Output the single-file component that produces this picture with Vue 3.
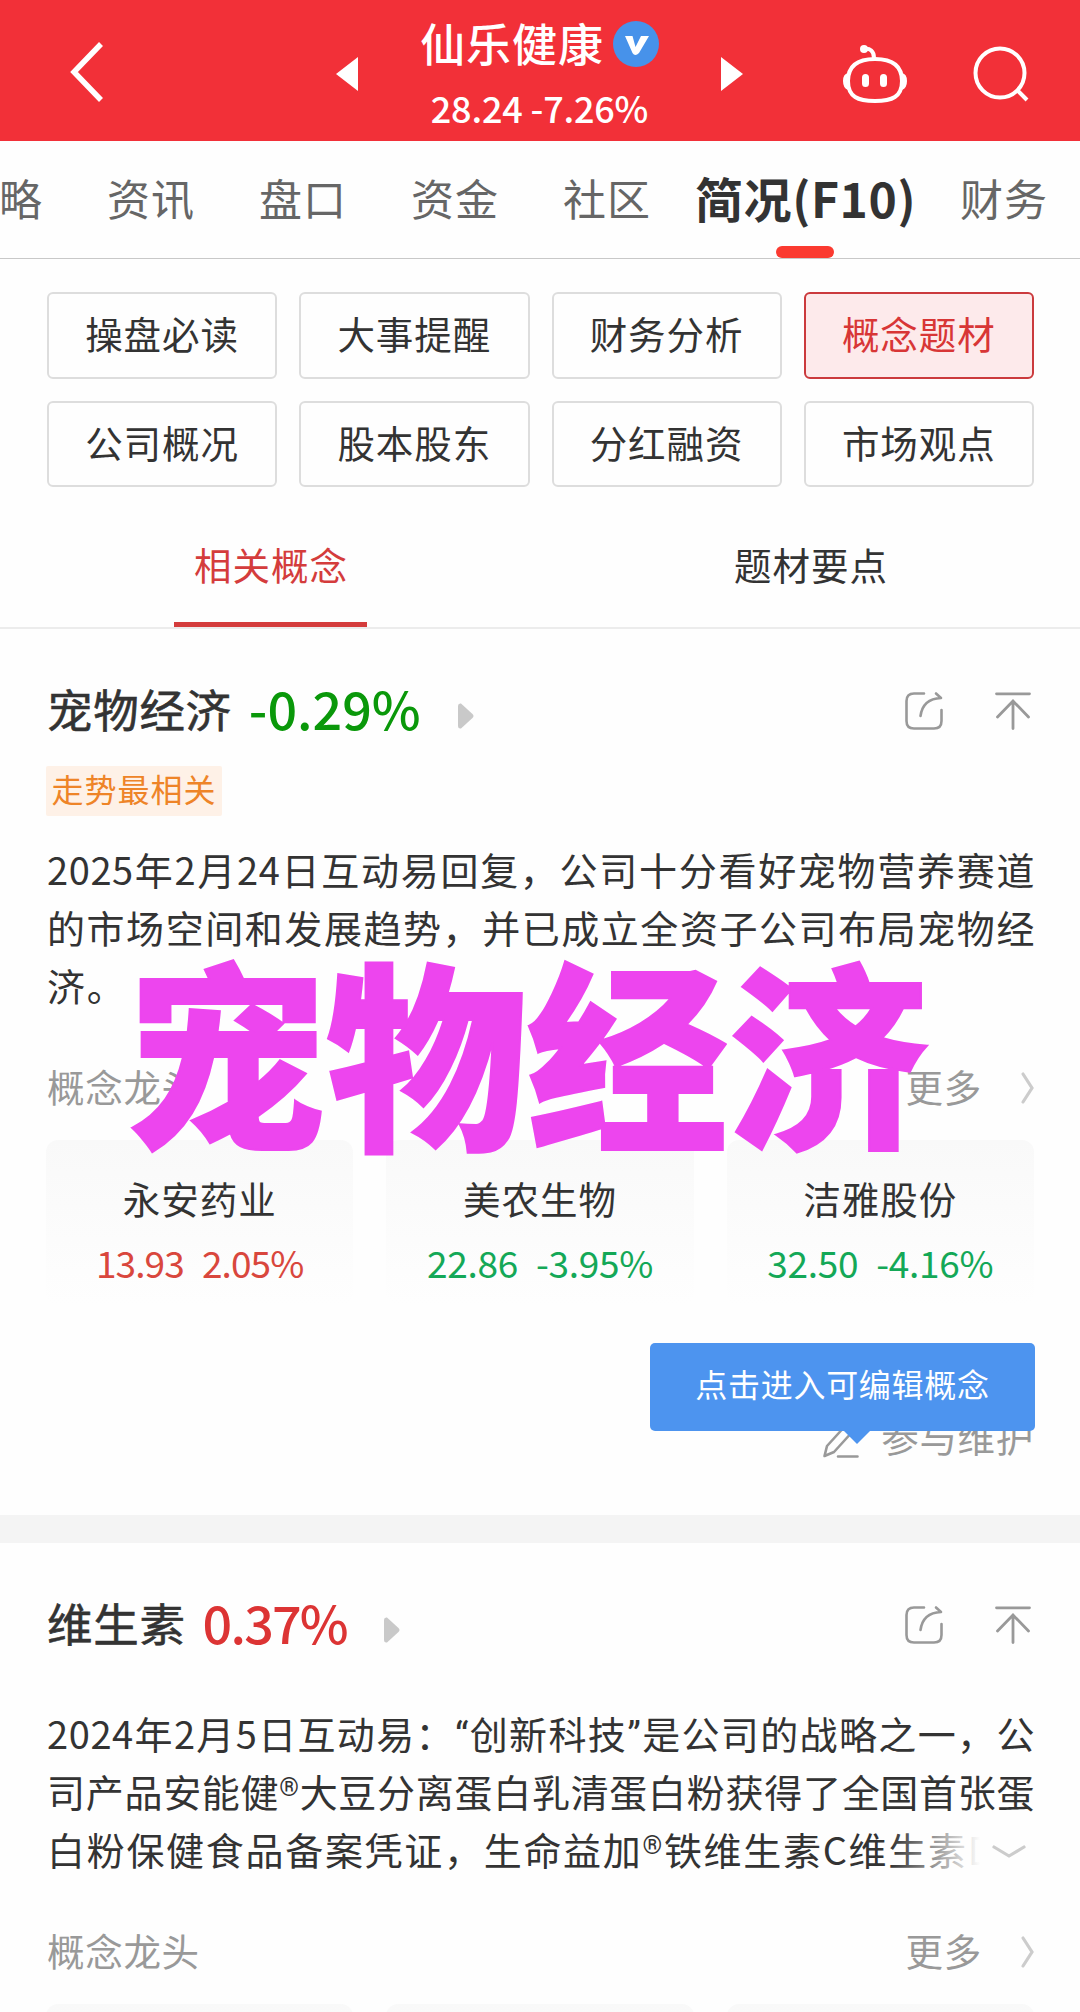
<template>
  <div class="page">
    <header class="top-bar">
      <svg class="back" viewBox="0 0 34 60" fill="none">
        <path d="M31 2 L4 30 L31 58" stroke="#fff" stroke-width="5.5" />
      </svg>
      <svg class="prev" viewBox="0 0 22 34"><path d="M22 0 V34 L0 17 Z" fill="#fff" /></svg>
      <div class="stock">
        <div class="stock-name">
          <span>{{ stock.name }}</span>
          <svg class="badge" viewBox="0 0 46 46">
            <circle cx="23" cy="23" r="23" fill="#4792ea" />
            <path d="M12 15 H19.5 L22.5 26 L28 15 H36 L26 32 Q22 36 19.5 32 Z" fill="#fff" />
          </svg>
        </div>
        <div class="stock-price">{{ stock.price }} {{ stock.change }}</div>
      </div>
      <svg class="next" viewBox="0 0 22 34"><path d="M0 0 V34 L22 17 Z" fill="#fff" /></svg>
      <svg class="robot" viewBox="0 0 64 60" fill="none" stroke="#fff">
        <circle cx="21" cy="5" r="4" fill="#fff" stroke="none" />
        <path d="M21 5 C27 4 31 7 31 14" stroke-width="4" />
        <path d="M32 15 C48 15 59 21 59 37 C59 53 49 57 32 57 C15 57 5 53 5 37 C5 21 16 15 32 15 Z" stroke-width="4" />
        <path d="M5 29 Q0 30 0 37 Q0 44 5 46 Z M59 29 Q64 30 64 37 Q64 44 59 46 Z" fill="#fff" stroke="none" />
        <path d="M22.5 33.500 V39.500 M40.500 33.500 V39.500" stroke-width="7" stroke-linecap="round" />
      </svg>
      <svg class="search" viewBox="0 0 56 56" fill="none" stroke="#fff" stroke-width="4">
        <circle cx="27" cy="27" r="24.500" />
        <path d="M44 44 L54 54" />
      </svg>
    </header>

    <nav class="tabs">
      <span v-for="t in tabs" :key="t" :class="['tab', { active: t === activeTab }]">{{ t }}</span>
    </nav>

    <div class="menu">
      <div v-for="m in menu" :key="m" :class="['menu-item', { active: m === activeMenu }]">{{ m }}</div>
    </div>

    <div class="sub-tabs">
      <div class="sub-tab active"><span>相关概念</span></div>
      <div class="sub-tab"><span>题材要点</span></div>
    </div>

    <section v-for="c in concepts" :key="c.name" class="concept">
      <div class="concept-head">
        <span class="concept-name">{{ c.name }}</span>
        <span :class="['concept-rate', c.up ? 'up' : 'down']">{{ c.rate }}</span>
        <svg class="play" viewBox="0 0 16 26">
          <path d="M0 3 Q0 0 3 0.500 L14.500 11 Q16.500 13 14.500 15 L3 25.500 Q0 26 0 23 Z" fill="#c9c9c9" />
        </svg>
        <svg class="share" viewBox="0 0 38 38" fill="none" stroke="#999" stroke-width="2.6" stroke-linecap="round" stroke-linejoin="round">
          <path d="M19 1.500 H9 Q1.500 1.500 1.500 9 V29 Q1.500 36.500 9 36.500 H29 Q36.500 36.500 36.500 29 V18" />
          <path d="M15.500 24 C17 13 24 6.500 36 6 L31 1.500" />
        </svg>
        <svg class="to-top" viewBox="0 0 36 38" fill="none" stroke="#999" stroke-width="2.800" stroke-linecap="round">
          <path d="M1.500 1.800 H34.500 M18 9 V36.500 M2.500 25 L18 9 L33.500 25" />
        </svg>
      </div>
      <div v-if="c.tag" class="tag">{{ c.tag }}</div>

      <div :class="['desc', { folded: c.folded }]">
        <p v-for="(line, i) in c.lines" :key="i" class="line">
          <span v-for="(part, j) in split(line)" :key="j" :class="partClass(part)">{{ part }}</span>
        </p>
        <div v-if="c.folded" class="fold">
          <svg viewBox="0 0 34 14" fill="none" stroke="#ccc" stroke-width="3.200" stroke-linecap="round">
            <path d="M2 2 L17 11 L32 2" />
          </svg>
        </div>
      </div>

      <div class="leader-head">
        <span>概念龙头</span>
        <span class="more">更多</span>
        <svg class="arrow" viewBox="0 0 13 32" fill="none" stroke="#ccc" stroke-width="3.200" stroke-linecap="round">
          <path d="M2 2 L11 16 L2 30" />
        </svg>
      </div>
      <div class="leaders">
        <div v-for="(s, k) in c.leaders" :key="k" class="leader">
          <div class="leader-name">{{ s.name }}</div>
          <div :class="['leader-quote', s.up ? 'up' : 'down']">
            <span>{{ s.price }}</span><span>{{ s.rate }}</span>
          </div>
        </div>
      </div>

      <div v-if="c.tip" class="maintain">
        <svg class="pencil" viewBox="0 0 36 38" fill="none" stroke="#999" stroke-width="2.600" stroke-linecap="round" stroke-linejoin="round">
          <path d="M1.500 36 L4 26 L24 4 L31 10 L11 32 Z M15 36.500 H34.500" />
        </svg>
        <span>参与维护</span>
        <div class="tip">{{ c.tip }}</div>
      </div>
    </section>

    <div class="caption">宠物经济</div>
  </div>
</template>

<script setup>
const stock = { name: '仙乐健康', price: '28.24', change: '-7.26%' }

const tabs = ['略', '资讯', '盘口', '资金', '社区', '简况(F10)', '财务']
const activeTab = '简况(F10)'

const menu = ['操盘必读', '大事提醒', '财务分析', '概念题材', '公司概况', '股本股东', '分红融资', '市场观点']
const activeMenu = '概念题材'

const concepts = [
  {
    name: '宠物经济',
    rate: '-0.29%',
    up: false,
    tag: '走势最相关',
    lines: [
      '2025年2月24日互动易回复，公司十分看好宠物营养赛道',
      '的市场空间和发展趋势，并已成立全资子公司布局宠物经',
      '济。'
    ],
    leaders: [
      { name: '永安药业', price: '13.93', rate: '2.05%', up: true },
      { name: '美农生物', price: '22.86', rate: '-3.95%', up: false },
      { name: '洁雅股份', price: '32.50', rate: '-4.16%', up: false }
    ],
    tip: '点击进入可编辑概念'
  },
  {
    name: '维生素',
    rate: '0.37%',
    up: true,
    folded: true,
    lines: [
      '2024年2月5日互动易：“创新科技”是公司的战略之一，公',
      '司产品安能健®大豆分离蛋白乳清蛋白粉获得了全国首张蛋',
      '白粉保健食品备案凭证，生命益加®铁维生素C维生素D'
    ],
    leaders: [{}, {}, {}]
  }
]

// quotes and ® are narrower than the surrounding Chinese text
const split = (line) => line.split(/([“”®])/)
const partClass = (part) => {
  if (part === '®') return 'reg'
  return part === '“' || part === '”' ? 'quote' : ''
}
</script>

<style>
body {
  margin: 0;
  background: #fff;
}
</style>

<style scoped>
.page {
  position: relative;
  width: 1080px;
  height: 2012px;
  overflow: hidden;
  background: #fefefe;
  color: #333;
  font-family: "Noto Sans CJK SC", sans-serif;
  font-size: 37.5px;
}

svg { display: block; flex-shrink: 0; overflow: visible; }

/* --- top bar --- */
.top-bar {
  box-sizing: border-box;
  height: 141px;
  padding: 6px 0 0 70px;
  display: flex;
  align-items: center;
  background: #f23038;
  color: #fff;
}
.back { width: 34px; height: 60px; margin: -3px 232px 0 0; }
.prev, .next { width: 22px; height: 34px; margin-top: 1px; }
.stock { width: 363px; align-self: flex-start; padding-top: 12px; }
.stock-name {
  display: flex;
  justify-content: center;
  align-items: center;
  gap: 9px;
  height: 50px;
  font-size: 45px;
  font-weight: 500;
  letter-spacing: 0.9px;
  line-height: 50px;
}
.badge { width: 46px; height: 46px; margin-top: 2px; }
.stock-price {
  margin-top: 19px;
  text-align: center;
  font-size: 36px;
  font-weight: 500;
  letter-spacing: -0.2px;
  line-height: 40px;
}
.robot { width: 64px; height: 60px; margin-left: 100px; }
.search { width: 56px; height: 56px; margin-left: 66px; }

/* --- tabs --- */
.tabs {
  box-sizing: border-box;
  height: 118px;
  padding-bottom: 6px;
  display: flex;
  align-items: center;
  gap: 64px;
  border-bottom: 1px solid #c8c8c8;
}
.tab {
  flex-shrink: 0;
  position: relative;
  color: #666;
  font-size: 43px;
  letter-spacing: 1px;
  line-height: 60px;
  white-space: nowrap;
}
.tab:first-child { margin-left: -1px; }
.tab.active {
  width: 221px;
  margin: 0 -20px;
  text-align: center;
  color: #333;
  font-size: 48px;
  font-weight: 700;
  letter-spacing: 0.6px;
  line-height: 58px;
}
.tab.active::after {
  content: '';
  position: absolute;
  left: 81px;
  bottom: -32px;
  width: 58px;
  height: 12px;
  border-radius: 6px;
  background: #fb3a30;
}

/* --- menu grid --- */
.menu {
  display: grid;
  grid-template-columns: repeat(4, 1fr);
  gap: 22px;
  padding: 33px 46px 0 47px;
}
.menu-item {
  box-sizing: border-box;
  height: 86.5px;
  border: 2px solid #ddd;
  border-radius: 6px;
  text-align: center;
  letter-spacing: 1px;
  line-height: 77px;
}
.menu-item.active {
  color: #d83636;
  background: #fdeaeb;
  border-color: #cb3a3d;
}

.sub-tabs {
  display: flex;
  height: 140px;
  border-bottom: 2px solid #ececec;
}
.sub-tab {
  flex: 1;
  display: flex;
  justify-content: center;
  letter-spacing: 1px;
}
.sub-tab span {
  box-sizing: border-box;
  width: 193px;
  height: 140px;
  padding: 47px 0 0 2px;
  text-align: center;
  line-height: 60px;
}
.sub-tab.active { color: #d43c3c; }
.sub-tab.active span { border-bottom: 5px solid #d43c3c; }

/* --- concept --- */
.concept {
  padding: 49px 46px 54px 47px;
  border-bottom: 28px solid #f4f4f4;
}
.concept-head { display: flex; align-items: center; height: 60px; }
.concept-name {
  font-size: 45.500px;
  letter-spacing: 0.7px;
  line-height: 62px;
  -webkit-text-stroke: 0.6px currentColor;
}
.concept-rate {
  margin-left: 17px;
  font-size: 52px;
  font-weight: 500;
  line-height: 62px;
}
.concept-rate.down { color: #0a980a; }
.concept-rate.up { color: #dc3434; letter-spacing: -1.8px; }
.play { width: 16px; height: 26px; margin: 16px auto 0 37px; }
.share { width: 38px; height: 38px; margin: 6px 52px 0 0; }
.to-top { width: 36px; height: 38px; margin: 5px 3px 0 0; }

.tag {
  width: 176px;
  height: 50px;
  margin: 28px 0 -4px -1px;
  border-radius: 2px;
  background: #fef1e7;
  color: #ee8428;
  font-size: 32px;
  letter-spacing: 1px;
  line-height: 45px;
  text-align: center;
}

.desc {
  position: relative;
  margin-top: 28px;
  font-size: 38px;
}
.desc.folded { margin-top: 52px; }
.line {
  margin: 0 -1px 0 0;
  height: 58px;
  letter-spacing: 0.6px;
  line-height: 58px;
  text-align: justify;
  text-align-last: justify;
  white-space: nowrap;
}
.folded .line:nth-child(2) { letter-spacing: 0.5px; }
.line:last-child, .folded .line:nth-child(3) {
  text-align-last: left;
  letter-spacing: 1.7px;
}
.quote { font-family: Roboto, sans-serif; }
.reg {
  font-family: Roboto, sans-serif;
  font-size: 25px;
  line-height: 0;
  vertical-align: 11px;
}
.fold {
  position: absolute;
  right: -20px;
  bottom: 0;
  width: 164px;
  height: 58px;
  background: linear-gradient(90deg, rgba(254, 254, 254, 0), #fefefe 55%);
}
.fold svg { width: 34px; height: 14px; margin: 25px 0 0 102px; }

.leader-head {
  display: flex;
  align-items: center;
  height: 50px;
  margin-top: 47px;
  color: #999;
  letter-spacing: 0.7px;
  line-height: 50px;
}
.more { margin-left: auto; }
.arrow { width: 13px; height: 32px; margin: 4px 0 0 39px; }

.leaders {
  display: grid;
  grid-template-columns: repeat(3, 1fr);
  gap: 33px;
  margin: 29px 0 0 -1px;
}
.leader {
  box-sizing: border-box;
  height: 165px;
  padding-top: 33px;
  border-radius: 12px;
  background: linear-gradient(180deg, #f9f9f9, #fefefe);
  text-align: center;
  line-height: 50px;
}
.leader-name { letter-spacing: 1px; }
.leader-quote {
  display: flex;
  justify-content: center;
  gap: 18px;
  margin-top: 14px;
  font-size: 37px;
}
.leader-quote.up { color: #d9473d; letter-spacing: -0.9px; }
.leader-quote.down { color: #14a857; letter-spacing: -0.3px; }

.maintain {
  position: relative;
  display: flex;
  justify-content: flex-end;
  align-items: center;
  height: 50px;
  margin-top: 106px;
  color: #999;
  letter-spacing: 0.7px;
  line-height: 56px;
}
.pencil { width: 36px; height: 38px; margin: 5px 22px 0 0; }
.tip {
  position: absolute;
  right: -1px;
  bottom: 30px;
  width: 385px;
  height: 88px;
  border-radius: 5px;
  background: #4d94ef;
  color: #fff;
  font-size: 32px;
  line-height: 81px;
  text-align: center;
}
.tip::after {
  content: '';
  position: absolute;
  left: 194px;
  top: 100%;
  border: 13px solid transparent;
  border-top-color: #4d94ef;
  border-bottom: 0;
}

/* big overlay title */
.caption {
  position: absolute;
  left: 125px;
  top: 928px;
  color: #ed45ee;
  font-size: 201px;
  font-weight: 900;
  line-height: 240px;
  white-space: nowrap;
  -webkit-text-stroke: 2px currentColor;
}
</style>
